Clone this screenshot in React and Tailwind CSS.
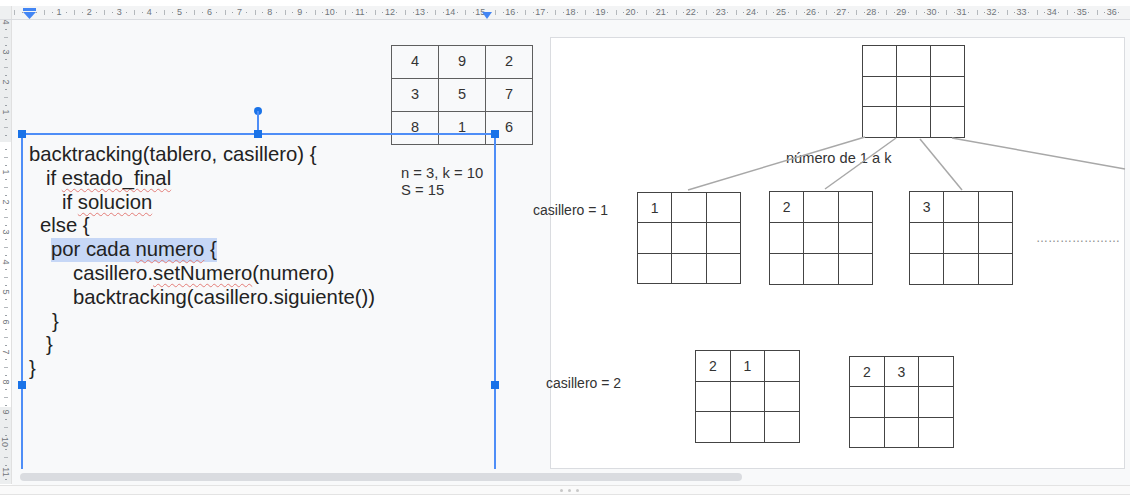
import React from 'react'

// one ruler unit, centred on its number
const HUnit = ({ n }) => (
  <div className="w-[30.09px] h-full shrink-0 flex items-center justify-between">
    <span className="w-px h-[5px] bg-[#b4b8bc]" />
    <span className="w-px h-px bg-[#9aa0a6]" />
    <span className="w-0 flex justify-center text-[9px] leading-[9px] text-[#70757a]">{n > 0 ? n : ''}</span>
    <span className="w-px h-px bg-[#9aa0a6]" />
    <span className="w-px h-px" />
  </div>
)

const VUnit = ({ n }) => (
  <div className="h-[30px] w-full shrink-0 flex flex-col items-center justify-between">
    <span className="w-[4px] h-px bg-[#b4b8bc]" />
    <span className="w-[2px] h-px bg-[#9aa0a6]" />
    <span className="h-0 flex items-center rotate-90 text-[9px] leading-[9px] text-[#70757a]">{n !== 0 ? Math.abs(n) : ''}</span>
    <span className="w-[2px] h-px bg-[#9aa0a6]" />
    <span className="w-px h-px" />
  </div>
)

const HRuler = () => (
  <div className="flex h-[14px] border-b border-[#dadce0] shrink-0">
    <div className="w-[12px] bg-[#eef0f1] border-r border-[#e0e0e0]" />
    <div className="relative flex-1 bg-[#f3f4f5] overflow-hidden">
      <div className="flex h-full pl-[2px]">
        {Array.from({ length: 37 }).map((_, n) => <HUnit key={n} n={n} />)}
      </div>
      {/* indent markers */}
      <svg className="absolute left-[11px] top-[2px]" width="13" height="12" viewBox="0 0 13 12">
        <rect x="0" y="0" width="13" height="3" fill="#4285f4" />
        <polygon points="0,4 13,4 6.5,11" fill="#4285f4" />
      </svg>
      <svg className="absolute left-[470px] top-[6px]" width="10" height="7" viewBox="0 0 10 7">
        <polygon points="0,0 10,0 5,7" fill="#4285f4" />
      </svg>
    </div>
  </div>
)

const VRuler = () => (
  <div className="relative w-[12px] h-[464px] shrink-0 border-r border-[#e0e0e0] overflow-hidden flex flex-col">
    <div className="h-[122px] bg-[#eceeef]" />
    <div className="h-[265px] bg-white" />
    <div className="flex-1 bg-[#eceeef]" />
    <div className="absolute inset-0 flex flex-col mt-[-13px]">
      {Array.from({ length: 16 }).map((_, i) => <VUnit key={i} n={i - 4} />)}
    </div>
  </div>
)

const Grid = ({ className, cells = [] }) => (
  <div className={`absolute grid grid-cols-3 grid-rows-3 gap-px p-px bg-[#444] ${className}`}>
    {Array.from({ length: 9 }).map((_, i) => (
      <div key={i} className="bg-white flex items-center justify-center text-[14px] text-[#333]">
        {cells[i] || ''}
      </div>
    ))}
  </div>
)

const squiggle = 'underline decoration-wavy decoration-[#e37d77] decoration-1 underline-offset-[3px]'

const Handle = ({ className }) => <div className={`absolute w-[8px] h-[8px] bg-[#1a73e8] ${className}`} />

const CodeBox = () => (
  <>
    {/* rotation handle */}
    <div className="absolute left-[242px] top-[87px] w-[8px] h-[8px] rounded-full bg-[#1a73e8]" />
    <div className="absolute left-[245px] top-[91px] w-[2px] h-[23px] bg-[#4f8ef7]" />

    <div className="absolute left-[9px] top-[113px] w-[475px] h-[400px] border-2 border-[#4f8ef7] pt-[8px] pl-[6px] text-[20.3px] leading-[23.75px] text-[#222] whitespace-nowrap">
      <div>backtracking(tablero, casillero) {'{'}</div>
      <div className="pl-[17px]">if <span className={squiggle}>estado_final</span></div>
      <div className="pl-[33px]">if <span className={squiggle}>solucion</span></div>
      <div className="pl-[11px]">else {'{'}</div>
      <div className="pl-[22px]">
        <span className="inline-block h-[24px] bg-[#c6d7f6]">
          por cada <span className={squiggle}>numero</span> {'{'}
        </span>
      </div>
      <div className="pl-[44px]">casillero.<span className={squiggle}>setNumero</span>(numero)</div>
      <div className="pl-[44px]">backtracking(casillero.siguiente())</div>
      <div className="pl-[23px]">{'}'}</div>
      <div className="pl-[17px]">{'}'}</div>
      <div>{'}'}</div>
    </div>

    {/* selection handles */}
    <Handle className="left-[6px] top-[110px]" />
    <Handle className="left-[242px] top-[110px]" />
    <Handle className="left-[479px] top-[110px]" />
    <Handle className="left-[6px] top-[361px]" />
    <Handle className="left-[479px] top-[361px]" />
  </>
)

const Slide = () => (
  <div className="relative mt-[17px] w-[575px] h-[432px] shrink-0 border border-[#dadce0] bg-white text-[14px] leading-[16px] text-[#333]">
    <Grid className="left-[311px] top-[7px] w-[103px] h-[93px]" />

    <div className="absolute left-[235px] top-[112px] text-[14.6px]">número de 1 a k</div>

    <div className="absolute left-[-18px] top-[164px]">casillero = 1</div>
    <Grid className="left-[86px] top-[154px] w-[104px] h-[92px]" cells={['1']} />
    <Grid className="left-[218px] top-[153px] w-[104px] h-[94px]" cells={['2']} />
    <Grid className="left-[358px] top-[153px] w-[104px] h-[94px]" cells={['3']} />
    <div className="absolute left-[485px] top-[194px] whitespace-nowrap text-[12px] leading-[12px] text-[#888]">…………………</div>

    <div className="absolute left-[-5px] top-[337px]">casillero = 2</div>
    <Grid className="left-[144px] top-[312px] w-[105px] h-[93px]" cells={['2', '1']} />
    <Grid className="left-[298px] top-[318px] w-[105px] h-[92px]" cells={['2', '3']} />

    <svg className="absolute inset-0 pointer-events-none overflow-visible" width="573" height="430">
      <g stroke="#a8a8a8" strokeWidth="1.5" fill="none">
        <line x1="314" y1="99" x2="137" y2="152" />
        <line x1="345" y1="100" x2="274" y2="151" />
        <line x1="369" y1="101" x2="411" y2="152" />
        <line x1="401" y1="100" x2="574" y2="131" />
      </g>
    </svg>
  </div>
)

export default function App() {
  return (
    <div className="w-[1130px] h-[501px] overflow-hidden bg-white flex flex-col font-['Liberation_Sans',Arial,sans-serif]">
      <div className="h-[6px] shrink-0 bg-white" />
      <HRuler />

      <div className="flex h-[465px] shrink-0">
        <VRuler />
        <div className="flex-1 flex flex-col">
          {/* canvas */}
          <div className="flex h-[449px] overflow-hidden bg-[#f8f9fa]">
            <div className="relative w-[538px] h-full shrink-0">
              <table className="absolute left-[379px] top-[25px] border-collapse text-[14.5px] text-[#333]">
                <tbody>
                  {[['4', '9', '2'], ['3', '5', '7'], ['8', '1', '6']].map((row, r) => (
                    <tr key={r}>
                      {row.map((v) => (
                        <td key={v} className="w-[47px] h-[33px] p-0 border border-[#5e5e5e] text-center align-middle">
                          {v}
                        </td>
                      ))}
                    </tr>
                  ))}
                </tbody>
              </table>
              <div className="absolute left-[389px] top-[145px] text-[14.8px] leading-[16.5px] text-[#333]">
                <div>n = 3, k = 10</div>
                <div>S = 15</div>
              </div>
              <CodeBox />
            </div>
            <Slide />
          </div>
          {/* horizontal scrollbar */}
          <div className="h-[16px] bg-[#f8f9fa] pl-[8px] pt-[4px]">
            <div className="w-[722px] h-[8px] rounded-full bg-[#dadce0]" />
          </div>
        </div>
      </div>

      <div className="h-[10px] shrink-0 border-t border-b border-[#e3e3e3] bg-[#fafafa] flex items-center gap-[5px] pl-[560px]">
        <span className="w-[3px] h-[3px] rounded-full bg-[#c8c8c8]" />
        <span className="w-[3px] h-[3px] rounded-full bg-[#c8c8c8]" />
        <span className="w-[3px] h-[3px] rounded-full bg-[#c8c8c8]" />
      </div>
      <div className="flex-1 bg-white" />
    </div>
  )
}
